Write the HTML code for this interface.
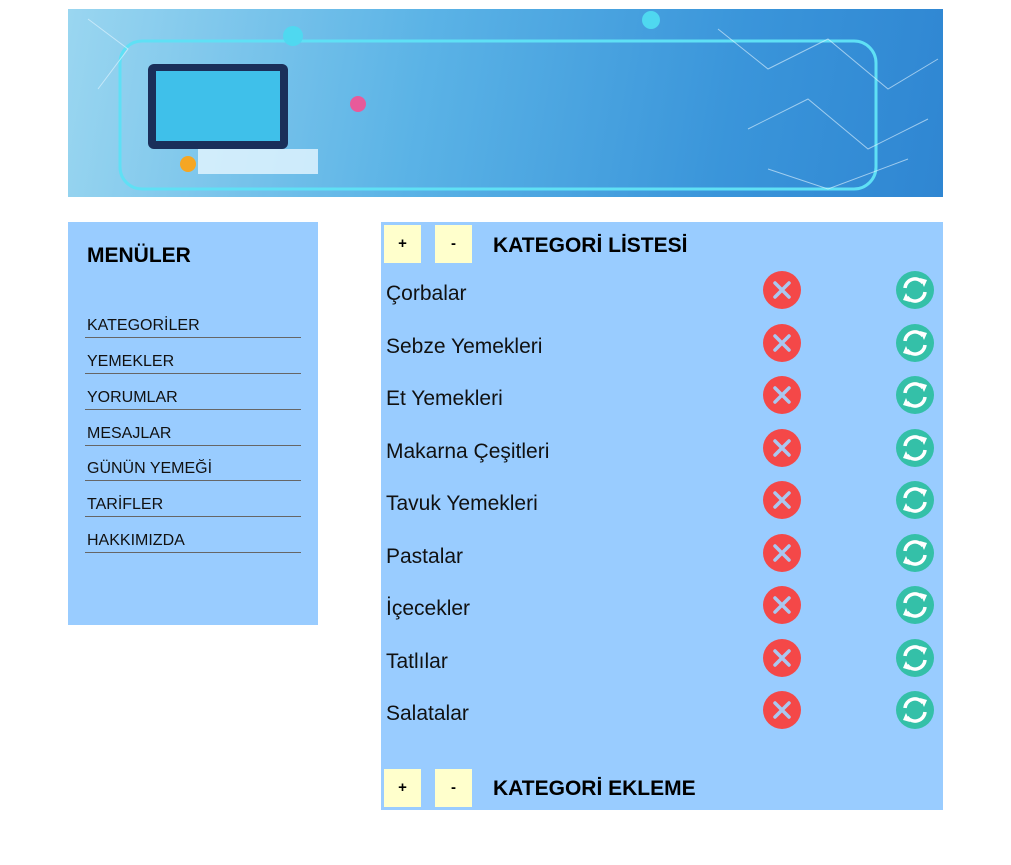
<!DOCTYPE html><html><head><meta charset="utf-8"><style>
body{margin:0;background:#fff;font-family:"Liberation Sans",sans-serif;}
.banner{position:absolute;left:68px;top:9px;width:875px;height:188px;background:linear-gradient(100deg,#9ad6f0 0%,#5bb3e6 40%,#3a95da 75%,#2f86d2 100%);overflow:hidden}
.left{position:absolute;left:68px;top:222px;width:250px;height:403px;background:#99ccff}
.left h2{position:absolute;left:19px;top:22px;margin:0;font-size:21px;font-weight:bold;color:#000}
.left .it{position:absolute;left:17px;width:216px;border-bottom:1px solid #666;font-size:16px;color:#111;height:22px;line-height:20px;padding-left:2px;box-sizing:border-box}
.main{position:absolute;left:381px;top:222px;width:562px;height:588px;background:#99ccff}
.btn{position:absolute;width:37px;height:38px;background:#ffffcc;font-weight:bold;font-size:15px;text-align:center;line-height:38px;color:#000}
.ttl{position:absolute;left:112px;font-size:21px;font-weight:bold;color:#000}
.row{position:absolute;left:5px;font-size:21px;color:#111}
.ic{position:absolute;width:38px;height:38px}
</style></head><body>
<div class="banner">
<svg width="875" height="188" style="position:absolute;left:0;top:0">
<rect x="52" y="32" width="756" height="148" rx="22" fill="none" stroke="#5fe0f5" stroke-width="3"/>
<circle cx="225" cy="27" r="10" fill="#4fd8f0"/><circle cx="583" cy="11" r="9" fill="#4fd8f0"/>
<rect x="80" y="55" width="140" height="85" rx="6" fill="#1a2f5a"/><rect x="88" y="62" width="124" height="70" fill="#3fc0ea"/>
<rect x="130" y="140" width="120" height="25" fill="#e6f6ff" opacity=".8"/>
<circle cx="120" cy="155" r="8" fill="#f5a623"/><circle cx="290" cy="95" r="8" fill="#e85a9a"/>
<g stroke="#e8f6ff" stroke-width="1" opacity=".6" fill="none"><path d="M650 20 L700 60 L760 30 L820 80 L870 50 M680 120 L740 90 L800 140 L860 110 M20 10 L60 40 L30 80 M700 160 L760 180 L840 150"/></g>
</svg></div>
<div class="left"><h2>MENÜLER</h2>
<div class="it" style="top:94px">KATEGORİLER</div>
<div class="it" style="top:130px">YEMEKLER</div>
<div class="it" style="top:166px">YORUMLAR</div>
<div class="it" style="top:202px">MESAJLAR</div>
<div class="it" style="top:237px">GÜNÜN YEMEĞİ</div>
<div class="it" style="top:273px">TARİFLER</div>
<div class="it" style="top:309px">HAKKIMIZDA</div>
</div>
<div class="main">
<div class="btn" style="left:3px;top:3px">+</div><div class="btn" style="left:54px;top:3px">-</div>
<div class="ttl" style="top:12px">KATEGORİ LİSTESİ</div>
<div class="btn" style="left:3px;top:547px">+</div><div class="btn" style="left:54px;top:547px">-</div>
<div class="ttl" style="top:555px">KATEGORİ EKLEME</div>
</div>
<div id="rows"></div>
<script>
var n=["Çorbalar","Sebze Yemekleri","Et Yemekleri","Makarna Çeşitleri","Tavuk Yemekleri","Pastalar","İçecekler","Tatlılar","Salatalar"];
var h="";
n.forEach(function(t,i){var c=293+i*52.5;
h+='<div class="row" style="left:386px;top:'+(c-11)+'px">'+t+'</div>';
h+='<svg class="ic" style="left:763px;top:'+(c-22)+'px" viewBox="0 0 38 38"><circle cx="19" cy="19" r="19" fill="#f44848"/><path d="M12 12L26 26M26 12L12 26" stroke="#a9c8f0" stroke-width="3.5" stroke-linecap="round"/></svg>';
h+='<svg class="ic" style="left:896px;top:'+(c-22)+'px" viewBox="0 0 38 38"><circle cx="19" cy="19" r="19" fill="#34c0a8"/><path d="M9 17A10 10 0 0 1 27 12" stroke="#fff" stroke-width="3.5" fill="none"/><path d="M29 21A10 10 0 0 1 11 26" stroke="#fff" stroke-width="3.5" fill="none"/><path d="M24 7L31 9L28 16Z M14 31L7 29L10 22Z" fill="#fff"/></svg>';
});
document.getElementById("rows").innerHTML=h;
</script>
</body></html>
